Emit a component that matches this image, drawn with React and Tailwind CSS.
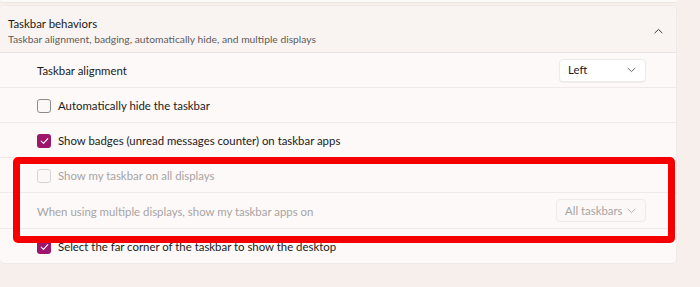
import React from "react";

const font = { fontFamily: 'Lato, "Noto Sans", sans-serif' };

function Chevron({ className = "" }) {
  return (
    <svg width="9" height="6" viewBox="0 0 9 6" className={className} fill="none">
      <path d="M1 1.2 L4.5 4.6 L8 1.2" stroke="currentColor" strokeWidth="1" strokeLinecap="round" strokeLinejoin="round" />
    </svg>
  );
}

function Box({ checked, disabled }) {
  if (checked) {
    return (
      <div className="w-[14px] h-[14px] rounded-[3px] bg-[#9c166c] flex items-center justify-center mt-[2px]">
        <svg width="9" height="8" viewBox="0 0 9 8" fill="none">
          <path d="M1.2 4.2 L3.5 6.3 L7.8 1.6" stroke="white" strokeWidth="1.1" strokeLinecap="round" strokeLinejoin="round" />
        </svg>
      </div>
    );
  }
  return (
    <div
      className={
        "w-[14px] h-[14px] rounded-[3px] border bg-[#fbf8f7] mt-[2px] " +
        (disabled ? "border-[#d8d3d2]" : "border-[#8e8a89]")
      }
    />
  );
}

export default function App() {
  return (
    <div className="w-[700px] h-[287px] bg-[#f7efec] overflow-hidden relative text-[#1b1b1b] whitespace-nowrap" style={font}>
      <div className="w-[677px] h-[3px] bg-[#fcfaf9] border-b border-[#ebe5e3] rounded-b-[4px]" />
      <div className="w-[677px] mt-[2px] rounded-[5px] bg-[#fcf9f8] border border-[#efe9e7] border-l-0 overflow-hidden">
        <div className="h-[47px] bg-[#f9f4f2] border-b border-[#e8e2e0] flex items-center pl-[8px] pr-[13px]">
          <div className="flex-1 flex flex-col leading-none pt-[4px]">
            <span className="text-[11.4px] text-[#1b1b1b]">Taskbar behaviors</span>
            <span className="text-[10.3px] text-[#5f5c5b] mt-[4px]">
              Taskbar alignment, badging, automatically hide, and multiple displays
            </span>
          </div>
          <Chevron className="rotate-180 text-[#3a3a3a] mt-[3px]" />
        </div>
        <div className="h-[35px] flex items-center justify-between pl-[37px] pr-[30px] border-b border-[#efe9e7]">
          <span className="text-[11.4px] mt-[2px]">Taskbar alignment</span>
          <div className="w-[87px] h-[23px] bg-white rounded-[4px] border border-[#eeeae9] shadow-[0_1px_1px_rgba(0,0,0,0.05)] flex items-center justify-between pl-[8px] pr-[9px]">
            <span className="text-[11.4px]">Left</span>
            <Chevron className="text-[#6b6b6b]" />
          </div>
        </div>
        <div className="h-[35px] flex items-center gap-[7px] pl-[37px] border-b border-[#efe9e7]">
          <Box />
          <span className="text-[11.4px] mt-[2px]">Automatically hide the taskbar</span>
        </div>
        <div className="h-[35px] flex items-center gap-[7px] pl-[37px] border-b border-[#efe9e7]">
          <Box checked />
          <span className="text-[11.4px] mt-[2px]">Show badges (unread messages counter) on taskbar apps</span>
        </div>
        <div className="h-[35px] flex items-center gap-[7px] pl-[37px] border-b border-[#efe9e7]">
          <Box disabled />
          <span className="text-[11.4px] mt-[2px] text-[#a8a4a3]">Show my taskbar on all displays</span>
        </div>
        <div className="h-[36px] flex items-center justify-between pl-[37px] pr-[30px] border-b border-[#efe9e7]">
          <span className="text-[11.4px] mt-[2px] text-[#a8a4a3]">When using multiple displays, show my taskbar apps on</span>
          <div className="w-[90px] h-[23px] bg-[#fbf8f7] rounded-[4px] border border-[#f0ebea] flex items-center justify-between pl-[8px] pr-[9px]">
            <span className="text-[11.4px] text-[#a8a4a3]">All taskbars</span>
            <Chevron className="text-[#b5b1b0]" />
          </div>
        </div>
        <div className="h-[34px] flex items-center gap-[7px] pl-[37px]">
          <Box checked />
          <span className="text-[11.4px] mt-[2px]">Select the far corner of the taskbar to show the desktop</span>
        </div>
      </div>
      <div className="absolute left-[13px] top-[157px] w-[662px] h-[86px] border-[7px] border-[#f50000] rounded-[5px]" />
    </div>
  );
}
